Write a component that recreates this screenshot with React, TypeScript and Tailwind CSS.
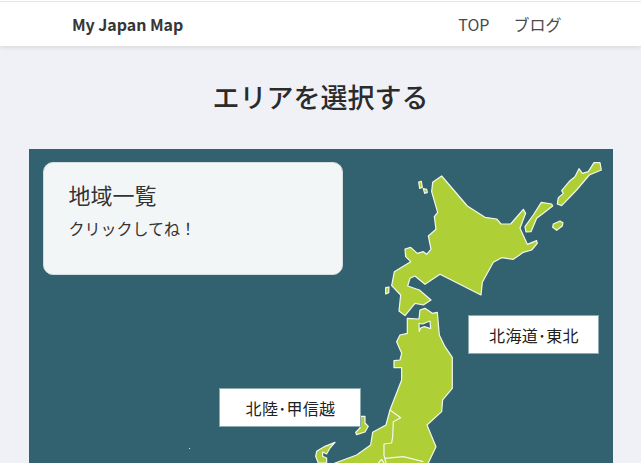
const hokkaido = "M185,78 L262,168 L315,202 L350,207 L363,222 L392,222 L430,178 L437,190 L420,235 L442,283 L470,272 L472,280 L455,300 L430,307 L400,328 L365,323 L340,337 L307,397 L303,435 L180,373 L135,403 L105,378 L90,385 L83,408 L118,420 L153,450 L130,465 L105,460 L75,497 L57,483 L62,435 L35,407 L43,365 L92,335 L77,320 L75,297 L92,292 L112,310 L130,305 L140,313 L153,298 L145,258 L168,238 L163,200 L173,187 L155,125 L158,97 Z";
const etorofu = "M642,38 L660,38 L664,60 L628,75 L590,120 L545,167 L532,162 L535,143 L550,130 L545,122 L570,92 L585,80 L597,56 L607,70 L625,65 Z";
const kunashiri = "M484,157 L515,162 L518,168 L490,190 L470,205 L453,245 L438,246 L435,230 L460,195 Z";
const shikotan = "M520,222 L540,213 L549,218 L547,228 L530,241 L518,232 Z";
const rishiri = "M116,96 L124,94 L127,112 L119,115 Z";
const rebun = "M130,116 L140,118 L142,127 L134,130 Z";
const okushiri = "M17,413 L27,411 L26,428 L17,432 Z";

const honshu = "M682,55 L717,57 L720,30 L735,25 L757,40 L772,37 L778,105 L795,140 L817,172 L817,265 L788,300 L785,335 L741,375 L768,440 L745,489 L745,520 L465,520 L465,489 L530,465 L572,435 L578,397 L618,375 L630,330 L665,240 L665,203 L642,203 L642,182 L660,180 L665,160 L650,125 L660,105 L682,100 Z";
const mutsu = "M717,70 L728,72 L750,63 L752,86 L733,80 L722,84 L718,94 Z";
const sado = "M542,349 L555,349 L555,369 L565,379 L555,396 L530,404 L527,397 L540,384 Z";
const noto = "M465,427 L435,439 L410,454 L407,469 L415,489 L440,489 L440,474 L428,469 L428,456 L440,462 L450,444 Z";
const borders = "M630,330 L662,353 L640,365 L638,411 L635,429 L612,432 L612,465 L618,489 M615,475 L670,470 L730,485 M595,489 L605,478 L612,489";

function Map() {
  return (
    <svg className="block w-[584px] h-[314px]" viewBox="29 149 584 314">
      <g transform="translate(380 150) scale(0.3333)" fill="#afcf36" stroke="#f4f7ee" strokeWidth="1.2" strokeLinejoin="round">
        {[hokkaido, etorofu, kunashiri, shikotan, rishiri, rebun, okushiri].map((d) => (
          <path key={d} d={d} vectorEffect="non-scaling-stroke" />
        ))}
      </g>
      <g transform="translate(180 300) scale(0.3333)" fill="#afcf36" stroke="#f4f7ee" strokeWidth="1.2" strokeLinejoin="round">
        {[honshu, sado, noto].map((d) => (
          <path key={d} d={d} vectorEffect="non-scaling-stroke" />
        ))}
        <path d={mutsu} fill="#32626f" vectorEffect="non-scaling-stroke" />
        <path d={borders} fill="none" vectorEffect="non-scaling-stroke" />
      </g>
      <rect x="189" y="448" width="1" height="1" fill="#dfe8ea" />
    </svg>
  );
}

export default function App() {
  return (
    <div className="h-[463px] overflow-hidden bg-[#f0f1f6] text-[#333] font-['Noto_Sans_CJK_JP','Noto_Sans',sans-serif]">
      <header className="h-[46px] bg-white pt-px shadow-[0_1px_5px_rgba(0,0,0,0.12)] flex flex-col">
        <div className="h-px bg-[#e6e6e6]" />
        <div className="flex-1 flex items-center justify-between pl-[72px] pr-[79.5px]">
          <span className="font-bold text-[16px] leading-none text-[#363636] tracking-[-0.05px]">My Japan Map</span>
          <nav className="flex gap-6 text-[16px] leading-none text-[#4a4a4a]">
            <span>TOP</span>
            <span>ブログ</span>
          </nav>
        </div>
      </header>
      <h1 className="mt-[30px] text-center text-[27px] leading-[42px] font-medium text-[#2b2b2b]">エリアを選択する</h1>
      <main className="relative mt-[31px] mx-[29px] w-[584px] h-[314px] bg-[#32626f] overflow-hidden">
        <Map />
        <section className="absolute left-[14px] top-[13px] w-[300px] h-[113px] rounded-[10px] bg-[#f3f6f7] border border-[#d5dcdf] pl-[24.5px] pt-[15px]">
          <h2 className="text-[22px] leading-[32px] text-[#333]">地域一覧</h2>
          <p className="mt-[6px] text-[16px] leading-[24px] text-[#333]">クリックしてね！</p>
        </section>
        <div className="absolute left-[439px] top-[166px] w-[131px] h-[39px] bg-white border border-[#8fa9b0] flex items-center justify-center pl-px text-[16px] tracking-[0.3px] text-[#222]">北海道･東北</div>
        <div className="absolute left-[190px] top-[239px] w-[142px] h-[39px] bg-white border border-[#8fa9b0] flex items-center justify-center pl-px text-[16px] tracking-[0.3px] text-[#222]">北陸･甲信越</div>
      </main>
    </div>
  );
}
